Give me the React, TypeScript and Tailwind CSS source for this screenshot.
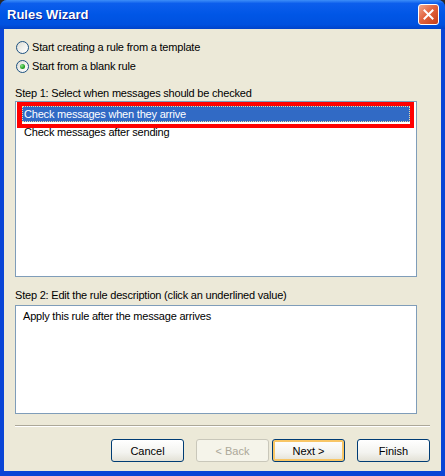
import React from 'react';

const uiFont = { fontFamily: '"Liberation Sans", Arial, sans-serif' };

const Radio = ({ checked, label }: { checked?: boolean; label: string }) => (
  <div className="flex h-[16px] items-center">
    <span className="flex h-[13px] w-[13px] items-center justify-center rounded-full border border-[#1C5180] bg-[linear-gradient(135deg,#DCDCD4_0%,#F2F2EE_55%,#FFFFFF_100%)]">
      {checked && (
        <span className="h-[5px] w-[5px] rounded-full bg-[radial-gradient(circle_at_35%_35%,#8BE38B_0%,#21A121_60%,#127312_100%)]" />
      )}
    </span>
    <span className="ml-[3px] text-[11px] leading-[14px] tracking-[-0.2px] text-black">{label}</span>
  </div>
);

const XpButton = ({
  children,
  disabled,
  isDefault,
}: {
  children: React.ReactNode;
  disabled?: boolean;
  isDefault?: boolean;
}) => (
  <button
    type="button"
    disabled={disabled}
    className={
      disabled
        ? 'flex h-[23px] w-[73px] items-center justify-center rounded-[3px] border border-[#C9C7BA] bg-[#F5F4EA] text-[11px] text-[#ACA899]'
        : isDefault
          ? 'flex h-[23px] w-[73px] items-center justify-center rounded-[3px] border border-[#003C74] bg-[linear-gradient(to_bottom,#FFFFFF_0%,#F3F3EF_60%,#E3E1D6_100%)] text-[11px] text-black shadow-[inset_0_0_0_2px_#F8C666]'
          : 'flex h-[23px] w-[73px] items-center justify-center rounded-[3px] border border-[#003C74] bg-[linear-gradient(to_bottom,#FFFFFF_0%,#F3F3EF_60%,#E3E1D6_100%)] text-[11px] text-black'
    }
  >
    {children}
  </button>
);

export default function App() {
  return (
    <div className="h-[476px] w-[445px] bg-[#2a2a2a]" style={uiFont}>
      <div className="flex h-[476px] w-[445px] flex-col overflow-hidden rounded-t-[7px] bg-[#0A45D6]">
        {/* title bar */}
        <div className="flex h-[29px] shrink-0 items-center justify-between bg-[linear-gradient(to_bottom,#3D8EF8_0%,#0C5EEC_12%,#0056E6_50%,#0051DF_85%,#0243C9_100%)] pl-[7px] pr-[6px]">
          <span className="text-[13px] font-bold text-white [text-shadow:1px_1px_0_#0A1E8C]">Rules Wizard</span>
          <div className="flex h-[21px] w-[21px] items-center justify-center rounded-[3px] border border-white bg-[linear-gradient(135deg,#F0A88E_0%,#E2643F_45%,#C53D17_100%)]">
            <svg width="11" height="11" viewBox="0 0 11 11">
              <path d="M1.5 1.5 L9.5 9.5 M9.5 1.5 L1.5 9.5" stroke="white" strokeWidth="2" strokeLinecap="square" />
            </svg>
          </div>
        </div>

        {/* client area */}
        <div className="mx-[4px] mb-[5px] flex flex-1 flex-col bg-[#ECE9D8] px-[11px] text-[11px] leading-[14px] tracking-[-0.2px]">
          <div className="ml-[1px] mt-[10px] flex flex-col gap-[3px]">
            <Radio label="Start creating a rule from a template" />
            <Radio checked label="Start from a blank rule" />
          </div>

          <p className="mt-[12px] text-black">Step 1: Select when messages should be checked</p>
          <div className="relative mt-[1px] h-[176px] w-[402px] border border-[#7F9DB9] bg-white px-[6px] pt-[4px]">
            <div className="h-[16px] border border-dotted border-[#E8D9A8] bg-[#316AC5] pl-[1px] text-white">
              Check messages when they arrive
            </div>
            <div className="h-[16px] pl-[2px] pt-[3px] text-black">Check messages after sending</div>
            <div className="absolute left-[1px] top-0 h-[26px] w-[397px] border-y-4 border-l-[5px] border-r-4 border-[#FF0000]" />
          </div>

          <p className="mt-[11px] text-black">Step 2: Edit the rule description (click an underlined value)</p>
          <div className="mt-[3px] h-[109px] w-[402px] border border-[#7F9DB9] bg-white px-[7px] pt-[3px] text-black">
            Apply this rule after the message arrives
          </div>

          <div className="mt-[11px] border-t border-b border-t-[#ACA899] border-b-white" />

          <div className="mt-[12px] flex justify-end tracking-normal">
            <XpButton>Cancel</XpButton>
            <div className="ml-[12px]">
              <XpButton disabled>&lt; Back</XpButton>
            </div>
            <div className="ml-[3px]">
              <XpButton isDefault>Next &gt;</XpButton>
            </div>
            <div className="ml-[12px]">
              <XpButton>Finish</XpButton>
            </div>
          </div>
        </div>
      </div>
    </div>
  );
}
